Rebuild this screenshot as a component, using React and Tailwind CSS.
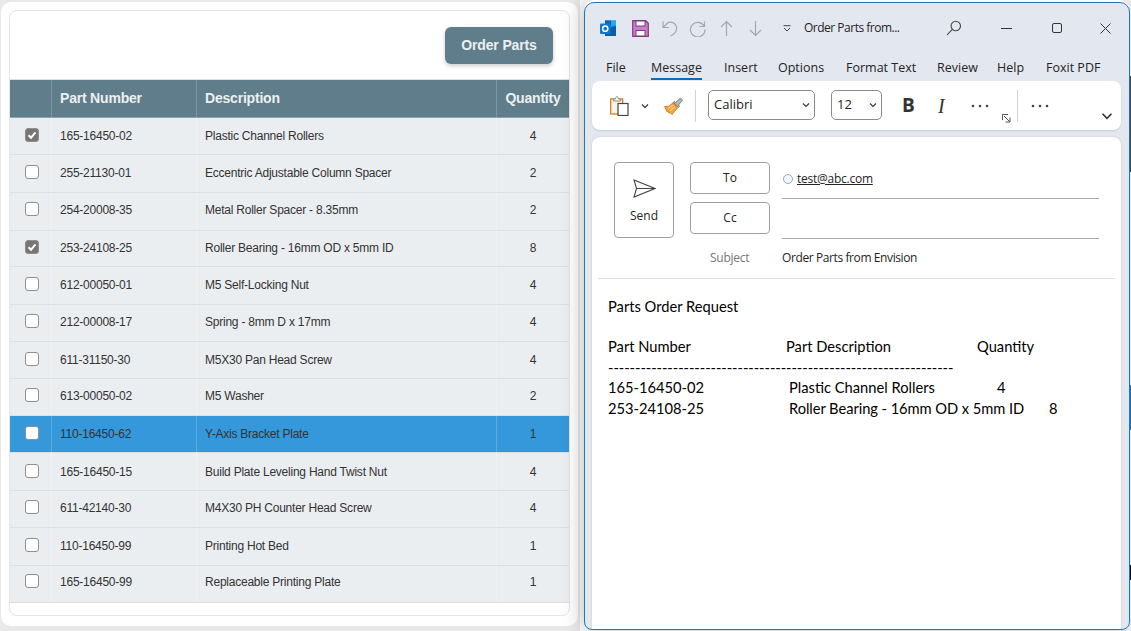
const parts = [
  { num: "165-16450-02", desc: "Plastic Channel Rollers", qty: 4, checked: true, h: "h-[37px]", pb: "pb-[1px]" },
  { num: "255-21130-01", desc: "Eccentric Adjustable Column Spacer", qty: 2, h: "h-[38px]", pb: "pb-[2px]" },
  { num: "254-20008-35", desc: "Metal Roller Spacer - 8.35mm", qty: 2, h: "h-[38px]", pb: "pb-[4px]" },
  { num: "253-24108-25", desc: "Roller Bearing - 16mm OD x 5mm ID", qty: 8, checked: true, h: "h-[36px]", pb: "pb-[2px]" },
  { num: "612-00050-01", desc: "M5 Self-Locking Nut", qty: 4, h: "h-[38px]", pb: "pb-[2px]" },
  { num: "212-00008-17", desc: "Spring - 8mm D x 17mm", qty: 4, h: "h-[37px]", pb: "pb-[2px]" },
  { num: "611-31150-30", desc: "M5X30 Pan Head Screw", qty: 4, h: "h-[37px]", pb: "pb-0" },
  { num: "613-00050-02", desc: "M5 Washer", qty: 2, h: "h-[37px]", pb: "pb-[2px]" },
  { num: "110-16450-62", desc: "Y-Axis Bracket Plate", qty: 1, active: true, h: "h-[37px]", pb: "pb-0" },
  { num: "165-16450-15", desc: "Build Plate Leveling Hand Twist Nut", qty: 4, h: "h-[38px]", pb: "pb-0" },
  { num: "611-42140-30", desc: "M4X30 PH Counter Head Screw", qty: 4, h: "h-[37px]", pb: "pb-[2px]" },
  { num: "110-16450-99", desc: "Printing Hot Bed", qty: 1, h: "h-[38px]", pb: "pb-[2px]" },
  { num: "165-16450-99", desc: "Replaceable Printing Plate", qty: 1, h: "h-[37px]", pb: "pb-[4px]" },
];

const tabs = [
  { label: "File", w: "w-[45px]" },
  { label: "Message", w: "w-[73px]", active: true },
  { label: "Insert", w: "w-[54px]" },
  { label: "Options", w: "w-[68px]" },
  { label: "Format Text", w: "w-[91px]" },
  { label: "Review", w: "w-[60px]" },
  { label: "Help", w: "w-[49px]" },
  { label: "Foxit PDF", w: "w-[70px]" },
];

const Checkbox = ({ checked }) => (
  <span
    className={`flex items-center justify-center w-[14px] h-[14px] mb-[2px] ml-[2px] rounded-[3px] border border-[#8f8f8f] ${
      checked ? "bg-[#767676]" : "bg-white"
    }`}
  >
    {checked && (
      <svg width="10" height="10" viewBox="0 0 10 10" fill="none">
        <path d="M1.5 5.2 4 7.7 8.5 2.4" stroke="white" strokeWidth="2" />
      </svg>
    )}
  </span>
);

const PartRow = ({ part }) => {
  const divider = part.active ? "border-[#5dade2]" : "border-[#f0f2f4]";

  return (
    <div
      className={`grid grid-cols-[42px_145px_300px_72px] border-b border-[#dcdfe3] text-[12px] tracking-[-0.23px] text-[#333] ${part.h} ${
        part.active ? "bg-[#3498db]" : "bg-[#ebeef1]"
      }`}
    >
      <div className={`flex items-center justify-center border-r ${divider} ${part.pb}`}>
        <Checkbox checked={part.checked} />
      </div>
      <div className={`flex items-center pl-[8px] border-r ${divider} ${part.pb}`}>{part.num}</div>
      <div className={`flex items-center pl-[8px] border-r ${divider} ${part.pb}`}>{part.desc}</div>
      <div className={`flex items-center justify-center ${part.pb}`}>{part.qty}</div>
    </div>
  );
};

const PartsPanel = () => (
  <div className="w-[580px] h-[631px] pt-[2px] pl-[1px] pr-[2px] pb-[5px] bg-[#e9e9e9]">
    <div className="h-full rounded-[10px] bg-white pt-[8px] px-[8px] pb-[10px]">
      <div className="h-full rounded-[8px] border border-[#e4e4e4] bg-white font-['Liberation_Sans',Arial,sans-serif] overflow-hidden">
        <div className="flex justify-end h-[68px] pt-[16px] pr-[16px]">
          <button className="w-[108px] h-[37px] rounded-[6px] bg-[#607d8b] text-[14px] tracking-[-0.15px] font-bold text-[#ecf0f1] shadow-[0_2px_4px_rgba(0,0,0,0.2)]">
            Order Parts
          </button>
        </div>
        <div className="grid grid-cols-[42px_145px_300px_72px] h-[39px] bg-[#607d8b] border-y border-y-[#dddddd] border-b-[#8fa3ad] text-[14px] tracking-[-0.2px] font-bold text-[#ecf0f1]">
          <div className="border-r border-[#7f97a3]" />
          <div className="flex items-center pl-[8px] border-r border-[#7f97a3]">Part Number</div>
          <div className="flex items-center pl-[8px] border-r border-[#7f97a3]">Description</div>
          <div className="flex items-center justify-center">Quantity</div>
        </div>
        {parts.map((part) => (
          <PartRow key={part.num} part={part} />
        ))}
      </div>
    </div>
  </div>
);

const OutlookIcon = () => (
  <svg width="17" height="17" viewBox="0 0 17 17">
    <rect x="5" y="0.5" width="11" height="15.5" fill="#1490df" />
    <rect x="5" y="0.5" width="6" height="5" fill="#0364b8" />
    <rect x="11" y="0.5" width="5" height="5" fill="#28a8ea" />
    <path d="M5 9 16 6v10H5z" fill="#0a5ea8" />
    <rect x="0" y="3.5" width="10.5" height="10.5" rx="1" fill="#0f78d4" />
    <circle cx="5.2" cy="8.7" r="2.6" fill="none" stroke="white" strokeWidth="1.5" />
  </svg>
);

const SaveIcon = () => (
  <svg width="17" height="17" viewBox="0 0 17 17" fill="none">
    <path d="M.7.7h13l2.6 2.6v13H.7z" fill="#c77dc9" stroke="#80397b" strokeWidth="1.2" />
    <rect x="4" y="1" width="9" height="5" fill="white" stroke="#80397b" />
    <rect x="4" y="10.5" width="9" height="5.5" fill="white" stroke="#80397b" />
  </svg>
);

const GrayStroke = ({ w, h, d, box }) => (
  <svg width={w} height={h} viewBox={box} fill="none" stroke="#a4a7ac" strokeWidth="1.2">
    <path d={d} />
  </svg>
);

const TitleBar = () => (
  <div className="flex items-center h-[43px] pt-[7px] pl-[15px] text-[12px] text-[#242424]">
    <OutlookIcon />
    <span className="ml-[15px]"><SaveIcon /></span>
    <span className="ml-[13px]"><GrayStroke w={16} h={17} box="0 0 16 17" d="M1 1.5v6h6M1.3 7.3 5 3.5c3-2.6 7.5-1 9 2 1.5 4-.5 8-5.5 10.5" /></span>
    <span className="ml-[11px]"><GrayStroke w={17} h={17} box="0 0 17 17" d="M15.5 1.5v5h-5M15 6A7.3 7.3 0 1 0 16 9.5" /></span>
    <span className="ml-[14px]"><GrayStroke w={13} h={17} box="0 0 13 17" d="M6.5 16V1.5M1 7l5.500-5.500L12 7" /></span>
    <span className="ml-[16px]"><GrayStroke w={13} h={17} box="0 0 13 17" d="M6.500 1v14.500M1 10l5.500 5.500L12 10" /></span>
    <svg className="ml-[21px]" width="8" height="7" viewBox="0 0 8 7" fill="none" stroke="#444">
      <path d="M.5.7h7M1 3l3 3 3-3" />
    </svg>
    <span className="ml-[13px] w-[142px] tracking-[-0.5px] font-['Open_Sans',sans-serif]">Order Parts from...</span>
    <svg width="16" height="16" viewBox="0 0 16 16" fill="none" stroke="#444" strokeWidth="1.1">
      <circle cx="9.800" cy="6" r="4.700" />
      <path d="M6.300 9.300 1 15" />
    </svg>
    <span className="ml-[39px] w-[11px] h-px bg-[#333]" />
    <span className="ml-[40px] w-[10px] h-[10px] rounded-[2px] border border-[#333]" />
    <svg className="ml-[38px]" width="11" height="11" viewBox="0 0 11 11" stroke="#333" strokeWidth="1">
      <path d="M.5.5l10 10M10.500.5l-10 10" />
    </svg>
  </div>
);

const TabBar = () => (
  <div className="flex h-[35px] pl-[21px] pt-[12px] text-[12.500px] text-[#242424] font-['Open_Sans',sans-serif]">
    {tabs.map((tab) => (
      <div key={tab.label} className={tab.w}>
        <span className={`inline-block h-[22px] leading-[19px] ${tab.active ? "border-b-2 border-[#0f6cbd]" : ""}`}>
          {tab.label}
        </span>
      </div>
    ))}
  </div>
);

const Dots = () => (
  <svg width="18" height="4" viewBox="0 0 18 4" fill="#444">
    <circle cx="2" cy="2" r="1.300" />
    <circle cx="9" cy="2" r="1.300" />
    <circle cx="16" cy="2" r="1.300" />
  </svg>
);

const Chevron = ({ size = 8 }) => (
  <svg width={size} height={size} viewBox="0 0 8 8" fill="none" stroke="#333" strokeWidth="1.100">
    <path d="M1 2.500 4 5.500 7 2.500" />
  </svg>
);

const Select = ({ value, className }) => (
  <div className={`flex items-center justify-between h-[30px] mb-[1px] pl-[5px] pr-[4px] rounded-[5px] border border-[#8a8a8a] text-[13px] text-[#242424] font-['Open_Sans',sans-serif] ${className}`}>
    {value}
    <Chevron />
  </div>
);

const Ribbon = () => (
  <div className="flex items-center relative h-[49px] w-[529px] ml-[7px] rounded-[8px] bg-white pl-[18px] shadow-[0_1px_2px_rgba(0,0,0,0.12)]">
    <svg width="19" height="20" viewBox="0 0 19 20" fill="none">
      <rect x="0.700" y="3" width="12" height="15" fill="#fbf3e8" stroke="#d9730d" strokeWidth="1.200" />
      <path d="M3.500 5V3h2c0-3 3-3 3 0h2v2z" fill="white" stroke="#8a8a8a" />
      <rect x="8" y="7.500" width="10" height="12" fill="white" stroke="#444" strokeWidth="1.200" />
    </svg>
    <span className="ml-[12px]"><Chevron /></span>
    <svg className="ml-[15px]" width="20" height="18" viewBox="0 0 20 18" fill="none">
      <path d="M.7 9.500 5 9.200l4-3.400 4.500 5-3 3.700L8 17.500 6 15.500l-1 .7-.8-2-1.200.4z" fill="#f6a63f" stroke="#dc7a12" />
      <path d="M4 11.500 9 8M6 14l5-4.500" stroke="#fde1b8" />
      <path d="M9.500 5.500 10 4.500l1.500 1 5-4.500 2 2-4 5 1 1.500-1 .8z" fill="#b8b8b8" stroke="#666" strokeWidth="0.800" />
    </svg>
    <span className="ml-[11px] w-px h-[32px] bg-[#d2d2d2]" />
    <Select value="Calibri" className="ml-[12px] w-[107px]" />
    <Select value="12" className="ml-[16px] w-[51px]" />
    <span className="ml-[20px] w-[12px] text-[19px] leading-none font-bold text-[#333] font-['Open_Sans',sans-serif]">B</span>
    <span className="ml-[24px] w-[12px] text-[20px] leading-none italic text-[#333] font-['Liberation_Serif',serif]">I</span>
    <span className="ml-[21px]"><Dots /></span>
    <svg className="ml-[13px] mt-[26px]" width="9" height="9" viewBox="0 0 9 9" fill="none" stroke="#555">
      <path d="M6 .5H.5V6M2 2l5.500 5.500M8 3.500V8H3.500" />
    </svg>
    <span className="ml-[6px] w-px h-[32px] bg-[#d2d2d2]" />
    <span className="ml-[13px]"><Dots /></span>
    <span className="absolute right-[8px] bottom-[8px]"><Chevron size={12} /></span>
  </div>
);

const FieldButton = ({ children }) => (
  <div className="flex items-center justify-center w-[80px] h-[32px] rounded-[4px] border border-[#a0a0a0] text-[12px] text-[#242424]">
    {children}
  </div>
);

const Compose = () => (
  <div className="h-[495px] w-[529px] ml-[7px] mt-[7px] px-[6px] rounded-t-[8px] bg-white text-[#242424] font-['Open_Sans',sans-serif] shadow-[0_0_2px_rgba(0,0,0,0.15)]">
    <div className="flex pt-[25px] pl-[16px] h-[142px] border-b border-[#dedede]">
      <div className="flex flex-col items-center w-[60px] h-[76px] pt-[16px] rounded-[4px] border border-[#a0a0a0] text-[12px]">
        <svg width="23" height="19" viewBox="0 0 23 19" fill="none" stroke="#444" strokeWidth="1.100">
          <path d="M1 1 22 9.500 1 18 3.500 9.500zM3.500 9.500H22" />
        </svg>
        <span className="mt-[9px]">Send</span>
      </div>
      <div className="flex flex-col ml-[16px] w-[80px]">
        <div className="flex flex-col gap-[8px]">
          <FieldButton>To</FieldButton>
          <FieldButton>Cc</FieldButton>
        </div>
        <span className="mt-[15px] ml-[20px] text-[12px] tracking-[-0.25px] text-[#757575]">Subject</span>
      </div>
      <div className="flex flex-col ml-[12px] w-[317px] text-[12px]">
        <div className="flex items-center h-[37px] pl-[1px] pb-[3px] border-b border-[#a8a8a8]">
          <span className="w-[10px] h-[10px] rounded-full border border-[#8fa9c4] bg-[#f4f8fc]" />
          <span className="ml-[4px] underline tracking-[-0.25px]">test@abc.com</span>
        </div>
        <div className="h-[40px] border-b border-[#a8a8a8]" />
        <span className="mt-[10px] tracking-[-0.4px]">Order Parts from Envision</span>
      </div>
    </div>
    <div className="pt-[17px] pl-[10px] text-[14.700px] leading-[21px] text-black font-['Lato',sans-serif]">
      <div>Parts Order Request</div>
      <div className="flex mt-[19px]">
        <span className="w-[178px]">Part Number</span>
        <span className="w-[191px]">Part Description</span>
        <span>Quantity</span>
      </div>
      <div className="h-[20px] whitespace-nowrap tracking-[-0.06px]">
        ----------------------------------------------------------------
      </div>
      <div className="flex">
        <span className="w-[181px]">165-16450-02</span>
        <span className="w-[208px]">Plastic Channel Rollers</span>
        <span>4</span>
      </div>
      <div className="flex">
        <span className="w-[181px]">253-24108-25</span>
        <span className="w-[260px] tracking-[-0.06px]">Roller Bearing - 16mm OD x 5mm ID</span>
        <span>8</span>
      </div>
    </div>
  </div>
);

const MailWindow = () => (
  <div className="relative z-10 w-[546px] h-[628px] mt-[2px] overflow-hidden rounded-t-[10px] rounded-b-[8px] border-[1.500px] border-[#1b78c4] bg-[#e3e7ef]">
    <TitleBar />
    <TabBar />
    <Ribbon />
    <Compose />
  </div>
);

export default function App() {
  return (
    <div className="flex w-[1131px] h-[631px] overflow-hidden bg-white">
      <PartsPanel />
      <div className="ml-[4px] h-[630px] rounded-[10px] shadow-[0_0_22px_rgba(0,0,0,0.3)]">
        <MailWindow />
      </div>
      {/* sliver of whatever sits behind the window at the right edge */}
      <div className="flex flex-col w-px bg-[#e8e8e8]">
        <div className="h-[76px]" />
        <div className="h-[96px] bg-[#444]" />
        <div className="h-[213px]" />
        <div className="h-[45px] bg-[#1b6fc0]" />
        <div className="h-[135px]" />
        <div className="h-[15px] bg-black" />
      </div>
    </div>
  );
}
